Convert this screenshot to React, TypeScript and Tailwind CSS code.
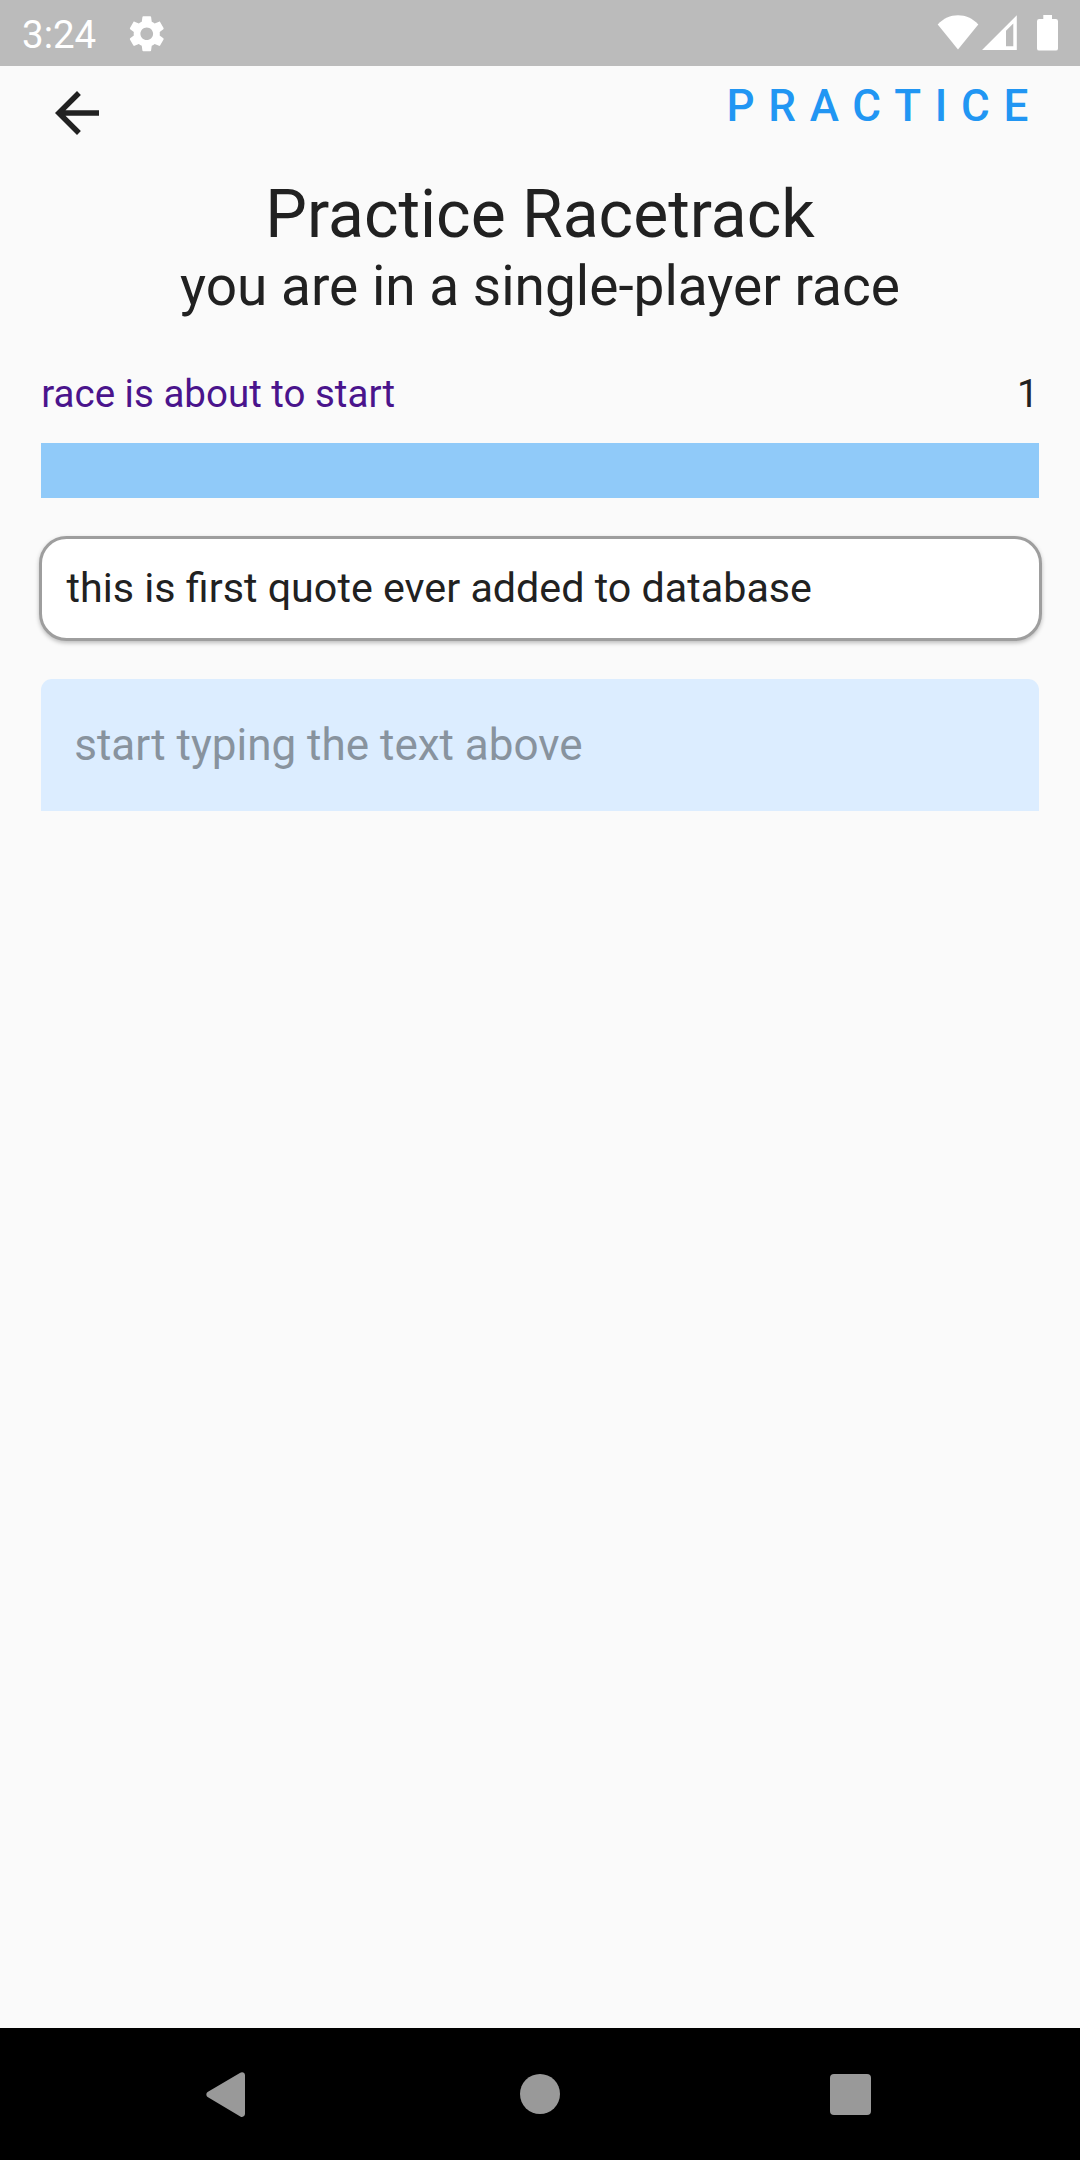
function StatusBar() {
  return (
    <header className="flex h-[66px] shrink-0 items-start bg-[#bbbbbb] pl-[22px] pr-[22px] text-white">
      <span className="mt-3 w-[75px] text-[38.5px] leading-[45px]">3:24</span>
      <svg className="ml-7 mt-[11.75px] size-[43.5px]" viewBox="0 0 24 24" fill="currentColor">
        <path d="M19.14 12.94c.04-.3.06-.61.06-.94 0-.32-.02-.64-.07-.94l2.03-1.58c.18-.14.23-.41.12-.61l-1.92-3.32c-.12-.22-.37-.29-.59-.22l-2.39.96c-.5-.38-1.03-.7-1.62-.94l-.36-2.54c-.04-.24-.24-.41-.48-.41h-3.84c-.24 0-.43.17-.47.41l-.36 2.54c-.59.24-1.13.57-1.62.94l-2.39-.96c-.22-.08-.47 0-.59.22L2.74 8.87c-.12.21-.08.47.12.61l2.03 1.58c-.05.3-.09.63-.09.94s.02.64.07.94l-2.03 1.58c-.18.14-.23.41-.12.61l1.92 3.32c.12.22.37.29.59.22l2.39-.96c.5.38 1.03.7 1.62.94l.36 2.54c.05.24.24.41.48.41h3.84c.24 0 .44-.17.47-.41l.36-2.54c.59-.24 1.13-.56 1.62-.94l2.39.96c.22.08.47 0 .59-.22l1.92-3.32c.12-.22.07-.47-.12-.61l-2.01-1.58zM12 15.5c-1.93 0-3.5-1.57-3.5-3.5s1.57-3.5 3.5-3.5 3.5 1.57 3.5 3.5-1.57 3.5-3.5 3.5z" />
      </svg>
      <div className="ml-auto mt-[15px] flex items-start">
        <svg className="h-[36px] w-[42px]" viewBox="0 0 42 36" fill="currentColor">
          <path d="M0.7 9.5C6.5 3.2 13.3 0.2 21 0.2s14.5 3 20.3 9.3L21 34.6z" />
        </svg>
        <svg className="ml-[3px] h-[36px] w-[35px]" viewBox="0 0 35 36" fill="currentColor">
          <path fillRule="evenodd" d="M0 35 34.8 0.2V35zM24 15.7V31.2h7.3V8.6z" />
        </svg>
        <svg className="ml-5 h-[36px] w-[21px]" viewBox="0 0 21 36" fill="currentColor">
          <path d="M6.3 0h8.7v4h3.8A2.2 2.2 0 0 1 21 6.2v27.2a2.2 2.2 0 0 1-2.2 2.2H2.2A2.2 2.2 0 0 1 0 33.4V6.2A2.2 2.2 0 0 1 2.2 4h4.1z" />
        </svg>
      </div>
    </header>
  );
}

function NavBar() {
  return (
    <nav className="flex h-[132px] shrink-0 items-start bg-black pl-[206px] pt-11 text-[#999999]">
      <svg className="h-[46px] w-[39px]" viewBox="0 0 39 46" fill="currentColor">
        <path d="M34.3 0.7A3 3 0 0 1 39 3.1V42a3 3 0 0 1-4.7 2.4L1.6 25a3 3 0 0 1 0-4.9z" />
      </svg>
      <div className="ml-[275px] mt-0.5 size-10 rounded-full bg-[#999999]" />
      <div className="ml-[270px] mt-0.5 size-[41.3px] rounded-[4px] bg-[#999999]" />
    </nav>
  );
}

export default function App() {
  return (
    <div className="flex h-[2160px] w-[1080px] flex-col bg-[#fafafa] font-['Roboto',sans-serif] text-[#212121]">
      <StatusBar />
      <main className="flex flex-1 flex-col pt-3.5">
        <div className="flex h-24 items-start justify-between pl-11 pr-[38px]">
          <button type="button" aria-label="Back">
            <svg className="size-[66px]" viewBox="0 0 24 24" fill="currentColor">
              <path d="M20 11H7.83l5.59-5.59L12 4l-8 8 8 8 1.41-1.41L7.83 13H20v-2z" />
            </svg>
          </button>
          <span className="text-[44px] font-medium leading-[52px] tracking-[13.75px] text-[#2196f3]">PRACTICE</span>
        </div>
        <h1 className="text-center text-[66px] leading-[77px]">Practice Racetrack</h1>
        <h2 className="mt-px text-center text-[55px] leading-[64px]">you are in a single-player race</h2>
        <div className="mt-[53px] flex justify-between px-[41.25px] text-[38.5px] leading-[45px]">
          <span className="text-[#4a148c]">race is about to start</span>
          <span>1</span>
        </div>
        <div className="mx-[41.25px] mt-[26.5px] h-[55px] bg-[#90caf9]" />
        <div className="mx-[38.5px] mt-[38.5px] flex h-[105px] items-center rounded-[27.5px] border-[3px] border-[#9e9e9e] bg-white pb-0.5 pl-[25px] text-[41.25px] leading-[48px] shadow-[0_2px_4px_rgba(0,0,0,0.25)]">
          this is first quote ever added to database
        </div>
        <div className="mx-[41.25px] mt-[38px] flex h-[132px] items-center rounded-t-[11px] bg-[#dcedff] pl-[33px] text-[44px] leading-[52px] text-[#88939e]">
          start typing the text above
        </div>
      </main>
      <NavBar />
    </div>
  );
}
